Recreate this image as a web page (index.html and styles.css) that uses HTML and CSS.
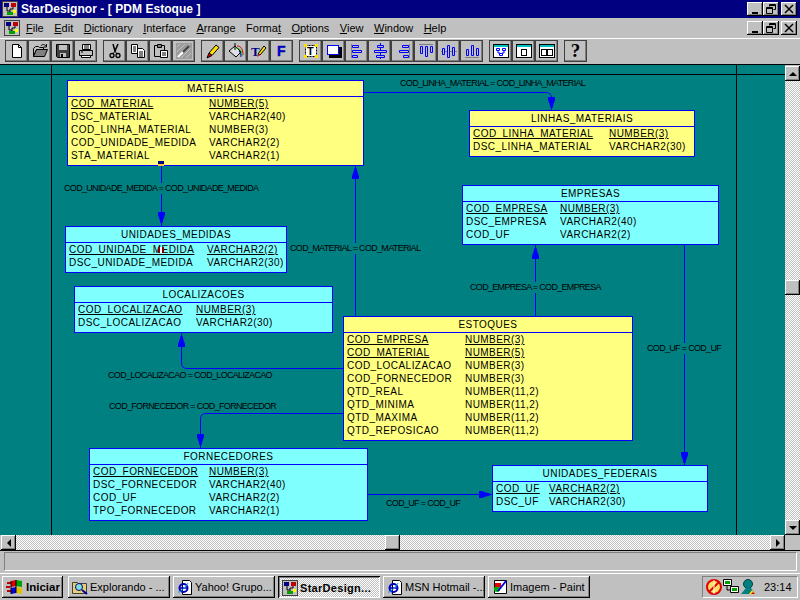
FILE: index.html
```html
<!DOCTYPE html>
<html>
  <head>
    <meta charset="utf-8" />
    <title>StarDesignor - [ PDM Estoque ]</title>
    <link rel="stylesheet" href="styles.css">
  </head>
  <body>
    <svg class="defs" width="0" height="0">
      <defs>
        <g id="ic-tree">
          <rect x="0.5" y="0.5" width="15" height="15" fill="#c0c0c0" stroke="#404040"/>
          <path d="M5 6v4h3M11 6v2H8v3" fill="none" stroke="#000"/>
          <rect x="2" y="2" width="5" height="4" fill="#000080"/>
          <rect x="9" y="2" width="5" height="4" fill="#c00000"/>
          <rect x="5" y="11" width="6" height="3" fill="#00a000"/>
          <rect x="11" y="9" width="3" height="3" fill="#ffff00"/>
        </g>
        <g id="ic-ie">
          <path d="M5.500 1.500h7l2 2v12h-9z" fill="#fff" stroke="#000"/>
          <circle cx="6.500" cy="9" r="4" fill="none" stroke="#0000c0" stroke-width="2"/>
          <path d="M3 9h7" stroke="#0000c0" stroke-width="1.500"/>
          <path d="M1 13c2 1 7-4 10-9" fill="none" stroke="#00a0e0"/>
        </g>
        <polygon id="head" points="-3.500,0 3.500,0 3.500,3 2,7 1,11 -1,11 -2,7 -3.500,3"/>
      </defs>
    </svg>

    <div class="titlebar">
      <svg class="app-icon" width="16" height="16"><use href="#ic-tree"/></svg>
      <span class="title-text">StarDesignor - [ PDM Estoque ]</span>
      <div class="win-btns">
        <button class="win-btn"><svg width="10" height="10"><path d="M2 8h6v2H2z"/></svg></button>
        <button class="win-btn"><svg width="10" height="10"><path d="M3.500 2.500V.5h6v5h-2M.5 3.500h6v6h-6zM.5 4.500h6M3.500 1.500h6" fill="none" stroke="#000"/></svg></button>
        <button class="win-btn win-close"><svg width="10" height="10"><path d="M1 1l8 8M9 1l-8 8" stroke="#000" stroke-width="1.500"/></svg></button>
      </div>
    </div>

    <div class="menubar">
      <svg class="doc-icon" width="16" height="16"><use href="#ic-tree"/></svg>
      <ul class="menu">
        <li><u>F</u>ile</li>
        <li><u>E</u>dit</li>
        <li><u>D</u>ictionary</li>
        <li><u>I</u>nterface</li>
        <li><u>A</u>rrange</li>
        <li>Forma<u>t</u></li>
        <li><u>O</u>ptions</li>
        <li><u>V</u>iew</li>
        <li><u>W</u>indow</li>
        <li><u>H</u>elp</li>
      </ul>
      <div class="win-btns">
        <button class="win-btn"><svg width="10" height="10"><path d="M2 8h6v2H2z"/></svg></button>
        <button class="win-btn"><svg width="10" height="10"><path d="M3.500 2.500V.5h6v5h-2M.5 3.500h6v6h-6zM.5 4.500h6M3.500 1.500h6" fill="none" stroke="#000"/></svg></button>
        <button class="win-btn win-close"><svg width="10" height="10"><path d="M1 1l8 8M9 1l-8 8" stroke="#000" stroke-width="1.500"/></svg></button>
      </div>
    </div>

    <div class="toolbar">
      <div class="tool-group">
        <button class="tool"><svg width="16" height="16"><path d="M3.500 1.500h6l3 3v10h-9z" fill="#fff" stroke="#000"/><path d="M9.500 1.500v3h3" fill="none" stroke="#000"/></svg></button>
        <button class="tool"><svg width="16" height="16"><path d="M1.500 5.500l2-2h3l1 1h4v2h-7l-3 7z" fill="#c0c0c0" stroke="#000"/><path d="M1.500 13.500l3-7h11l-3 7z" fill="#808080" stroke="#000"/><path d="M9 3c1-2 3-2 5 0M14.500 1v3h-3" fill="none" stroke="#000"/></svg></button>
        <button class="tool"><svg width="16" height="16"><path d="M1.500 1.500h13v13h-12l-1-1z" fill="#404040" stroke="#000"/><rect x="4" y="2" width="8" height="5" fill="#c0c0c0"/><rect x="5" y="10" width="6" height="4" fill="#c0c0c0"/><rect x="6" y="11" width="2" height="3" fill="#000"/></svg></button>
        <button class="tool"><svg width="16" height="16"><path d="M4.500 1.500h8v5h-8z" fill="#fff" stroke="#000"/><path d="M6 3h5M6 5h5" stroke="#000"/><path d="M1.500 7.500h13v5h-13z" fill="#c0c0c0" stroke="#000"/><path d="M3.500 12.500h9v2h-9z" fill="#fff" stroke="#000"/><path d="M3 9h2" stroke="#000"/></svg></button>
      </div>
      <div class="tool-group">
        <button class="tool"><svg width="16" height="16"><path d="M6 1l2 7M11 1L8 8" stroke="#000" stroke-width="1.500"/><circle cx="5" cy="12.500" r="2" fill="none" stroke="#000" stroke-width="1.300"/><circle cx="11" cy="12.500" r="2" fill="none" stroke="#000" stroke-width="1.300"/><path d="M8 8L6 11M8 8l2 3" stroke="#000"/></svg></button>
        <button class="tool"><svg width="16" height="16"><path d="M1.500 1.500h6v9h-6z" fill="#fff" stroke="#000"/><path d="M3 4h3M3 6h3M3 8h3" stroke="#000"/><path d="M7.500 5.500h5l2 2v7h-7z" fill="#fff" stroke="#000"/><path d="M9 9h4M9 11h4M9 13h4" stroke="#000"/></svg></button>
        <button class="tool"><svg width="16" height="16"><path d="M1.500 2.500h10v11h-10z" fill="#c0c0c0" stroke="#000"/><path d="M4.500 1.500h4v3h-4z" fill="#808080" stroke="#000"/><path d="M7.500 7.500h7v7h-7z" fill="#fff" stroke="#000"/><path d="M9 10h4M9 12h4" stroke="#000"/></svg></button>
        <button class="tool"><svg width="16" height="16"><path d="M0 0h16v16H0z" fill="#808080" opacity=".55"/><path d="M1 4l3-3M1 9l8-8M1 14L14 1M5 15L15 5M10 15l5-5" stroke="#c0c0c0"/><path d="M2 14l5-5" stroke="#fff" stroke-width="2"/><path d="M7 9l6-6" stroke="#404040" stroke-width="2"/></svg></button>
      </div>
      <div class="tool-group">
        <button class="tool"><svg width="16" height="16"><path d="M4 10l7-8 3 2.500-7 8z" fill="#ffe000" stroke="#000"/><path d="M4 10l-2 5 5-2.500z" fill="#e00000" stroke="#000"/></svg></button>
        <button class="tool"><svg width="16" height="16"><path d="M1 8l6-5 6 6-5 5z" fill="#e0e0e0" stroke="#000"/><path d="M7 0v7" stroke="#000"/><path d="M9 3c4 0 6 3 6 9" fill="none" stroke="#e00000"/><path d="M8 5c4 0 6 3 6 8" fill="none" stroke="#00c000"/><path d="M11 8c1 1 2 3 2 6" fill="none" stroke="#0000e0"/></svg></button>
        <button class="tool"><svg width="16" height="16"><text class="ic-t" x="0" y="13">T</text><path d="M7 11l6-8 2 2-6 7z" fill="#ffe000" stroke="#000"/><path d="M7 11l-1 3 3-2z" fill="#e00000"/></svg></button>
        <button class="tool"><svg width="16" height="16"><text class="ic-f" x="3" y="13">F</text></svg></button>
      </div>
      <div class="tool-group">
        <button class="tool"><svg width="16" height="16"><rect x="2.500" y="2.500" width="11" height="11" fill="#fff" stroke="#000" stroke-dasharray="2 1"/><path d="M1 1h3v3H1zM12 1h3v3h-3zM1 12h3v3H1zM12 12h3v3h-3z" fill="#ffe000"/><text class="ic-tb" x="4" y="12">T</text></svg></button>
        <button class="tool"><svg width="16" height="16"><rect x="3" y="4" width="13" height="11" fill="#000"/><rect x="1.500" y="2.500" width="11" height="9" fill="#fff" stroke="#0000ff"/></svg></button>
        <button class="tool"><svg width="16" height="16"><path d="M2.500 1v14" stroke="#808080"/><path d="M3.500 2.500h6v2h-6zM3.500 7.500h9v2h-9zM3.500 12.500h5v2h-5z" fill="#c0c0c0" stroke="#0000ff"/></svg></button>
        <button class="tool"><svg width="16" height="16"><path d="M8.500 0v16" stroke="#0000ff"/><path d="M5.500 2.500h6v2h-6zM2.500 7.500h12v2h-12zM4.500 12.500h8v2h-8z" fill="#c0c0c0" stroke="#0000ff"/></svg></button>
        <button class="tool"><svg width="16" height="16"><path d="M14.500 1v14" stroke="#808080"/><path d="M7.500 2.500h6v2h-6zM4.500 7.500h9v2h-9zM8.500 12.500h5v2h-5z" fill="#c0c0c0" stroke="#0000ff"/></svg></button>
        <button class="tool"><svg width="16" height="16"><path d="M1 1.500h14" stroke="#808080"/><path d="M2.500 3.500h2v7h-2zM7.500 3.500h2v10h-2zM12.500 3.500h2v6h-2z" fill="#c0c0c0" stroke="#0000ff"/></svg></button>
        <button class="tool"><svg width="16" height="16"><path d="M0 8.500h16" stroke="#808080"/><path d="M1.500 5.500h2v6h-2zM6.500 2.500h2v12h-2zM11.500 4.500h2v8h-2z" fill="#c0c0c0" stroke="#0000ff"/></svg></button>
        <button class="tool"><svg width="16" height="16"><path d="M1 14.500h14" stroke="#808080"/><path d="M2.500 6.500h2v6h-2zM7.500 2.500h2v10h-2zM12.500 5.500h2v7h-2z" fill="#c0c0c0" stroke="#0000ff"/></svg></button>
      </div>
      <div class="tool-group">
        <button class="tool"><svg width="16" height="16"><rect x="0.500" y="1.500" width="15" height="13" fill="#fff" stroke="#000"/><rect x="1" y="2" width="14" height="2" fill="#00c0c0"/><path d="M3.500 5.500h3v2h-3zM9.500 5.500h3v2h-3zM6.500 10.500h3v2h-3zM5 8v2h2M11 8v2H9" fill="none" stroke="#0000ff"/></svg></button>
        <button class="tool"><svg width="16" height="16"><rect x="0.500" y="1.500" width="15" height="13" fill="#fff" stroke="#000"/><rect x="1" y="2" width="14" height="2" fill="#00c0c0"/><rect x="5.500" y="6.500" width="5" height="6" fill="#fff" stroke="#000"/></svg></button>
        <button class="tool"><svg width="16" height="16"><rect x="0.500" y="1.500" width="15" height="13" fill="#fff" stroke="#000"/><rect x="1" y="2" width="14" height="2" fill="#00c0c0"/><rect x="2.500" y="6.500" width="5" height="6" fill="#fff" stroke="#000"/><rect x="8.500" y="6.500" width="5" height="6" fill="#fff" stroke="#000"/></svg></button>
      </div>
      <div class="tool-group">
        <button class="tool"><span class="help-mark">?</span></button>
      </div>
    </div>

    <div class="workspace">
      <div class="canvas">
        <svg class="links" width="785" height="470" viewBox="0 65 785 470">
          <g fill="none" stroke="#0000ff">
            <path d="M364 92.500H546Q551.500 92.500 551.500 98V110"/>
            <path d="M161.500 166V226"/>
            <path d="M355.500 166V316"/>
            <path d="M535.500 245V316"/>
            <path d="M684.500 245V465"/>
            <path d="M343 368.500H187Q181.500 368.500 181.500 363V333"/>
            <path d="M343 413.500H206Q200.500 413.500 200.500 419V448"/>
            <path d="M367 494.500H492"/>
          </g>
          <g fill="#0000ff">
            <use href="#head" transform="translate(551.500 97)"/>
            <use href="#head" transform="translate(161.500 212)"/>
            <use href="#head" transform="translate(355.500 179) scale(1 -1)"/>
            <use href="#head" transform="translate(535.500 259) scale(1 -1)"/>
            <use href="#head" transform="translate(684.500 452)"/>
            <use href="#head" transform="translate(181.500 347) scale(1 -1)"/>
            <use href="#head" transform="translate(200.500 434)"/>
            <use href="#head" transform="translate(479 494.500) rotate(-90)"/>
          </g>
        </svg>

        <div class="entity yellow e-materiais">
          <h3>MATERIAIS</h3>
          <div class="cols">
            <span class="pk">COD_MATERIAL</span><span class="pk">NUMBER(5)</span>
            <span>DSC_MATERIAL</span><span>VARCHAR2(40)</span>
            <span>COD_LINHA_MATERIAL</span><span>NUMBER(3)</span>
            <span>COD_UNIDADE_MEDIDA</span><span>VARCHAR2(2)</span>
            <span>STA_MATERIAL</span><span>VARCHAR2(1)</span>
          </div>
        </div>
        <div class="entity yellow e-linhas">
          <h3>LINHAS_MATERIAIS</h3>
          <div class="cols">
            <span class="pk">COD_LINHA_MATERIAL</span><span class="pk">NUMBER(3)</span>
            <span>DSC_LINHA_MATERIAL</span><span>VARCHAR2(30)</span>
          </div>
        </div>
        <div class="entity cyan e-empresas">
          <h3>EMPRESAS</h3>
          <div class="cols">
            <span class="pk">COD_EMPRESA</span><span class="pk">NUMBER(3)</span>
            <span>DSC_EMPRESA</span><span>VARCHAR2(40)</span>
            <span>COD_UF</span><span>VARCHAR2(2)</span>
          </div>
        </div>
        <div class="entity cyan e-unidades">
          <h3>UNIDADES_MEDIDAS</h3>
          <div class="cols">
            <span class="pk">COD_UNIDADE_MEDIDA</span><span class="pk">VARCHAR2(2)</span>
            <span>DSC_UNIDADE_MEDIDA</span><span>VARCHAR2(30)</span>
          </div>
        </div>
        <div class="entity cyan e-localizacoes">
          <h3>LOCALIZACOES</h3>
          <div class="cols">
            <span class="pk">COD_LOCALIZACAO</span><span class="pk">NUMBER(3)</span>
            <span>DSC_LOCALIZACAO</span><span>VARCHAR2(30)</span>
          </div>
        </div>
        <div class="entity yellow e-estoques">
          <h3>ESTOQUES</h3>
          <div class="cols">
            <span class="pk">COD_EMPRESA</span><span class="pk">NUMBER(3)</span>
            <span class="pk">COD_MATERIAL</span><span class="pk">NUMBER(5)</span>
            <span>COD_LOCALIZACAO</span><span>NUMBER(3)</span>
            <span>COD_FORNECEDOR</span><span>NUMBER(3)</span>
            <span>QTD_REAL</span><span>NUMBER(11,2)</span>
            <span>QTD_MINIMA</span><span>NUMBER(11,2)</span>
            <span>QTD_MAXIMA</span><span>NUMBER(11,2)</span>
            <span>QTD_REPOSICAO</span><span>NUMBER(11,2)</span>
          </div>
        </div>
        <div class="entity cyan e-fornecedores">
          <h3>FORNECEDORES</h3>
          <div class="cols">
            <span class="pk">COD_FORNECEDOR</span><span class="pk">NUMBER(3)</span>
            <span>DSC_FORNECEDOR</span><span>VARCHAR2(40)</span>
            <span>COD_UF</span><span>VARCHAR2(2)</span>
            <span>TPO_FORNECEDOR</span><span>VARCHAR2(1)</span>
          </div>
        </div>
        <div class="entity cyan e-federais">
          <h3>UNIDADES_FEDERAIS</h3>
          <div class="cols">
            <span class="pk">COD_UF</span><span class="pk">VARCHAR2(2)</span>
            <span>DSC_UF</span><span>VARCHAR2(30)</span>
          </div>
        </div>

        <span class="marker marker-fk"></span>
        <span class="marker marker-sel"></span>

        <span class="rel l-linha">COD_LINHA_MATERIAL = COD_LINHA_MATERIAL</span>
        <span class="rel l-unidade">COD_UNIDADE_MEDIDA = COD_UNIDADE_MEDIDA</span>
        <span class="rel l-material">COD_MATERIAL = COD_MATERIAL</span>
        <span class="rel l-empresa">COD_EMPRESA = COD_EMPRESA</span>
        <span class="rel l-uf-a">COD_UF = COD_UF</span>
        <span class="rel l-local">COD_LOCALIZACAO = COD_LOCALIZACAO</span>
        <span class="rel l-forn">COD_FORNECEDOR = COD_FORNECEDOR</span>
        <span class="rel l-uf-b">COD_UF = COD_UF</span>
      </div>
      <div class="vscroll">
        <button class="sb-btn"><i class="arrow up"></i></button>
        <div class="sb-track"></div>
        <button class="sb-btn"></button>
        <div class="sb-track sb-long"></div>
        <button class="sb-btn"><i class="arrow down"></i></button>
      </div>
    </div>

    <div class="hscroll">
      <button class="sb-btn"><i class="arrow left"></i></button>
      <div class="sb-track sb-h-a"></div>
      <button class="sb-btn"></button>
      <div class="sb-track sb-long"></div>
      <button class="sb-btn"><i class="arrow right"></i></button>
      <div class="sb-corner"></div>
    </div>

    <div class="statusbar"><div class="status-panel"></div></div>

    <div class="taskbar">
      <button class="start">
        <svg width="18" height="16"><path d="M1 3h4v2H1zM0 7h4v2H0zM1 11h4v2H1z" fill="#c00000"/><path d="M5 2l5-1v6l-5 1z" fill="#e00000"/><path d="M10 1l6 1v6l-6-1z" fill="#00a000"/><path d="M5 9l5-1v6l-5 1z" fill="#0000e0"/><path d="M10 8l6 1v6l-6-1z" fill="#e0c000"/><path d="M5 2v13M10 1v13" stroke="#000"/></svg>
        Iniciar
      </button>
      <button class="task"><svg width="16" height="16"><path d="M.5 3.500h5l1 1h8v10H.5z" fill="#e8d070" stroke="#404040"/><circle cx="7" cy="8" r="3.500" fill="#80e0e0" stroke="#000080"/><path d="M10 11l5 4" stroke="#0000a0" stroke-width="2"/></svg><span>Explorando - ...</span></button>
      <button class="task"><svg width="16" height="16"><use href="#ic-ie"/></svg><span>Yahoo! Grupo...</span></button>
      <button class="task active"><svg width="16" height="16"><use href="#ic-tree"/></svg><span>StarDesign...</span></button>
      <button class="task"><svg width="16" height="16"><use href="#ic-ie"/></svg><span>MSN Hotmail -...</span></button>
      <button class="task"><svg width="16" height="16"><path d="M2.500 1.500h12v13h-12z" fill="#fff" stroke="#000"/><circle cx="5" cy="10" r="3" fill="#00b000"/><path d="M3 4h6v4H3z" fill="#e00000"/><path d="M6 12l8-10" stroke="#0000e0" stroke-width="2"/></svg><span>Imagem - Paint</span></button>
      <div class="tray">
        <svg width="16" height="16"><circle cx="8" cy="8" r="7" fill="#ffe060" stroke="#e00000" stroke-width="2"/><path d="M3 13L13 3" stroke="#e00000" stroke-width="2"/><path d="M8 1v14" stroke="#fff"/></svg>
        <svg width="16" height="16"><path d="M.5.500h8v6h-8z" fill="#fff" stroke="#000"/><rect x="2" y="2" width="5" height="3" fill="#00a000"/><path d="M7.500 7.500h8v6h-8z" fill="#fff" stroke="#000"/><rect x="9" y="9" width="5" height="3" fill="#00a000"/><path d="M4 7v4h3" fill="none" stroke="#000"/></svg>
        <svg width="16" height="16"><circle cx="8" cy="5" r="4.500" fill="#008080" stroke="#004040"/><path d="M1 15l5-6h5l4 6z" fill="#008080"/><path d="M9 15l3-4 3 4z" fill="#ffe000"/><path d="M11 15l2-2 2 2z" fill="#e00000"/></svg>
        <span class="clock">23:14</span>
      </div>
    </div>
  </body>
</html>
```

FILE: styles.css
```css
html,
body {
  margin: 0;
  padding: 0;
}
body {
  display: flex;
  flex-direction: column;
  width: 800px;
  height: 600px;
  overflow: hidden;
  background-color: #c0c0c0;
  color: #000;
  font-family: "Liberation Sans", Arial, sans-serif;
  font-size: 11px;
}
button {
  margin: 0;
  padding: 0;
  border: none;
  background-color: #c0c0c0;
  font-family: inherit;
  font-size: inherit;
  color: inherit;
}
svg {
  display: block;
  flex: none;
}
.defs {
  position: absolute;
}

/* title + menu */
.titlebar {
  display: flex;
  align-items: center;
  height: 18px;
  padding-left: 2px;
  background-color: #000080;
}
.title-text {
  margin-left: 3px;
  color: #fff;
  font-size: 12px;
  font-weight: bold;
  letter-spacing: 0.05px;
  white-space: nowrap;
}
.win-btns {
  display: flex;
  margin-left: auto;
  padding-right: 3px;
}
.win-btn {
  display: flex;
  align-items: center;
  justify-content: center;
  width: 16px;
  height: 14px;
  box-shadow: inset -1px -1px 0 #000, inset 1px 1px 0 #fff, inset -2px -2px 0 #808080;
}
.win-close {
  margin-left: 2px;
}
.menubar {
  display: flex;
  align-items: center;
  height: 20px;
  padding-left: 4px;
}
.menu {
  display: flex;
  gap: 10.5px;
  margin: 0 0 0 6px;
  padding: 0;
  list-style: none;
  white-space: nowrap;
}

/* toolbar */
.toolbar {
  display: flex;
  gap: 6px;
  height: 27px;
  padding: 1px 0 0 5px;
  box-sizing: border-box;
  border-top: 1px solid #fff;
  border-bottom: 1px solid #000;
}
.tool-group {
  display: flex;
}
.tool {
  display: flex;
  align-items: center;
  justify-content: center;
  width: 23px;
  height: 22px;
  box-shadow: inset -1px -1px 0 #000, inset 1px 1px 0 #fff, inset -2px -2px 0 #808080;
  outline: 1px solid #404040;
  outline-offset: -1px;
}
.ic-t {
  font: bold 13px "Liberation Serif", serif;
  fill: #000080;
}
.ic-tb {
  font: bold 11px "Liberation Sans", sans-serif;
  fill: #000;
}
.ic-f {
  font: bold 14px "Liberation Sans", sans-serif;
  fill: #0000e0;
  stroke: #000080;
  stroke-width: 0.4px;
}
.help-mark {
  font: bold 19px "Liberation Serif", serif;
  line-height: 20px;
}

/* diagram */
.workspace {
  display: flex;
  height: 470px;
}
.canvas {
  position: relative;
  width: 785px;
  height: 470px;
  overflow: hidden;
  background-color: #008080;
  background-image:
    linear-gradient(#000, #000),
    linear-gradient(#000, #000),
    linear-gradient(#000, #000);
  background-repeat: no-repeat;
  background-size: 1px 100%, 1px 100%, 100% 1px;
  background-position: 51px 0, 736px 0, 0 9px;
}
.links {
  position: absolute;
  left: 0;
  top: 0;
  z-index: 2;
}
.entity {
  position: absolute;
  box-sizing: border-box;
  border: 1px solid #00f;
  font-size: 10px;
  letter-spacing: 0.45px;
  line-height: 13px;
  white-space: nowrap;
  z-index: 3;
}
.yellow {
  background-color: #ffff80;
}
.cyan {
  background-color: #80ffff;
}
.entity h3 {
  height: 15px;
  margin: 0;
  border-bottom: 1px solid #00f;
  box-sizing: content-box;
  font-size: 10px;
  font-weight: normal;
  line-height: 15px;
  text-align: center;
}
.cols {
  display: grid;
  grid-template-columns: var(--name) auto;
  justify-content: start;
  padding: 0 0 0 3px;
}
.pk {
  justify-self: start;
  text-decoration: underline;
}
.e-materiais {
  left: 67px;
  top: 15px;
  width: 297px;
  height: 86px;
  --name: 138px;
}
.e-linhas {
  left: 469px;
  top: 45px;
  width: 226px;
  height: 47px;
  --name: 136px;
}
.e-empresas {
  left: 462px;
  top: 120px;
  width: 257px;
  height: 60px;
  --name: 94px;
}
.e-unidades {
  left: 65px;
  top: 161px;
  width: 222px;
  height: 47px;
  --name: 138px;
}
.e-localizacoes {
  left: 74px;
  top: 221px;
  width: 259px;
  height: 47px;
  --name: 118px;
}
.e-estoques {
  left: 343px;
  top: 251px;
  width: 290px;
  height: 125px;
  --name: 118px;
}
.e-fornecedores {
  left: 89px;
  top: 383px;
  width: 279px;
  height: 73px;
  --name: 116px;
}
.e-federais {
  left: 492px;
  top: 400px;
  width: 216px;
  height: 47px;
  --name: 53px;
}
.marker {
  position: absolute;
  width: 6px;
  z-index: 4;
}
.marker-fk {
  left: 158px;
  top: 96px;
  height: 5px;
  background: linear-gradient(#000080 0 3px, #ffc040 3px);
}
.marker-sel {
  left: 158px;
  top: 182px;
  height: 6px;
  background: linear-gradient(90deg, #800000 0 2px, #fff 2px 4px, #800000 4px);
}
.rel {
  position: absolute;
  color: #000;
  font-size: 9px;
  letter-spacing: -0.68px;
  line-height: 11px;
  white-space: nowrap;
  background-color: #008080;
  z-index: 2;
}
.l-linha {
  left: 400px;
  top: 13px;
}
.l-unidade {
  left: 64px;
  top: 118px;
}
.l-material {
  left: 290px;
  top: 178px;
}
.l-empresa {
  left: 470px;
  top: 217px;
}
.l-uf-a {
  left: 647px;
  top: 278px;
}
.l-local {
  left: 108px;
  top: 305px;
}
.l-forn {
  left: 109px;
  top: 336px;
}
.l-uf-b {
  left: 386px;
  top: 433px;
}

/* scrollbars */
.sb-btn {
  display: flex;
  align-items: center;
  justify-content: center;
  flex: none;
  width: 15px;
  height: 15px;
  box-shadow: inset -1px -1px 0 #000, inset 1px 1px 0 #fff, inset -2px -2px 0 #808080;
}
.sb-track {
  background: repeating-conic-gradient(#c0c0c0 0 25%, #fff 0 50%) 0 0 / 2px 2px;
}
.sb-long {
  flex: 1;
}
.vscroll {
  display: flex;
  flex-direction: column;
  width: 15px;
  padding-top: 1px;
  box-sizing: border-box;
}
.vscroll .sb-track {
  width: 15px;
}
.vscroll .sb-track:nth-child(2) {
  height: 199px;
}
.hscroll {
  display: flex;
  height: 15px;
  padding-left: 1px;
  border-bottom: 1px solid #000;
}
.sb-h-a {
  width: 369px;
}
.sb-corner {
  width: 15px;
}
.arrow {
  width: 0;
  height: 0;
  border: 4px solid transparent;
}
.arrow.up {
  border-top: none;
  border-bottom-color: #000;
}
.arrow.down {
  border-bottom: none;
  border-top-color: #000;
}
.arrow.left {
  border-left: none;
  border-right-color: #000;
}
.arrow.right {
  border-right: none;
  border-left-color: #000;
}

/* status + taskbar */
.statusbar {
  height: 22px;
  padding: 1px 3px 0 4px;
  box-sizing: border-box;
}
.status-panel {
  height: 19px;
  box-sizing: border-box;
  border: 1px solid;
  border-color: #808080 #fff #fff #808080;
}
.taskbar {
  display: flex;
  gap: 3px;
  height: 27px;
  padding: 2px;
  box-sizing: border-box;
  border-top: 1px solid #fff;
}
.start,
.task {
  display: flex;
  align-items: center;
  flex: none;
  height: 22px;
  box-shadow: inset -1px -1px 0 #000, inset 1px 1px 0 #fff, inset -2px -2px 0 #808080;
}
.start {
  gap: 2px;
  width: 61px;
  margin-right: 2px;
  padding-left: 4px;
  box-sizing: border-box;
  font-weight: bold;
  font-size: 11.5px;
}
.task {
  gap: 2px;
  width: 102px;
  padding-left: 4px;
  box-sizing: border-box;
  white-space: nowrap;
}
.task.active {
  background: repeating-conic-gradient(#c0c0c0 0 25%, #fff 0 50%) 0 0 / 2px 2px;
  box-shadow: inset 1px 1px 0 #000, inset -1px -1px 0 #fff, inset 2px 2px 0 #808080;
  font-weight: bold;
  letter-spacing: 0.3px;
  padding-top: 1px;
}
.tray {
  display: flex;
  align-items: center;
  gap: 1px;
  width: 96px;
  height: 22px;
  margin-left: auto;
  padding-left: 3px;
  box-sizing: border-box;
  border: 1px solid;
  border-color: #808080 #fff #fff #808080;
}
.clock {
  margin-left: 7px;
}
```
